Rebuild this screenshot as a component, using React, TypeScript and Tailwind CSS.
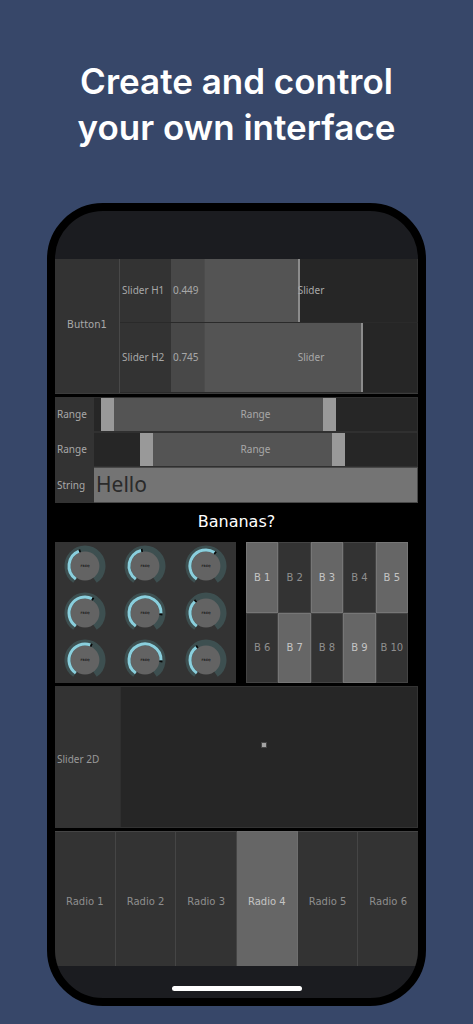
import { useState } from "react";
import type { PointerEvent } from "react";

type SliderProps = {
  label: string;
  initial: number;
};

type RangeProps = {
  low: number;
  high: number;
};

const KNOB_SWEEP = 145;

// Angles in degrees, 0 is straight up
const knobAngles = [-22, -14, 32, 26, 92, -44, 20, 92, -37];

function polar(angle: number, radius: number) {
  const rad = ((angle - 90) * Math.PI) / 180;
  return `${(21 + radius * Math.cos(rad)).toFixed(2)} ${(21 + radius * Math.sin(rad)).toFixed(2)}`;
}

function arc(from: number, to: number, radius: number) {
  const large = to - from > 180 ? 1 : 0;
  return `M ${polar(from, radius)} A ${radius} ${radius} 0 ${large} 1 ${polar(to, radius)}`;
}

function SliderRow({ label, initial }: SliderProps) {
  const [value, setValue] = useState(initial);

  return (
    <div className="flex border-b border-[#2a2a2a] font-['Noto_Sans',sans-serif]">
      <div className="flex w-[51px] items-center bg-[#333] pl-[2px]">{label}</div>
      <div className="flex w-[34px] items-center border-r border-[#4c4c4c] bg-[#484848] pl-[2px]">
        {value.toFixed(3)}
      </div>
      <div className="relative flex flex-1 items-center justify-center border-r border-[#303030] bg-[#262626]">
        <div
          className="absolute inset-y-0 left-0 border-r-2 border-[#8c8c8c] bg-[#545454]"
          style={{ width: `${value * 100}%` }}
        />
        <span className="relative">Slider</span>
        <input
          type="range"
          aria-label={label}
          min={0}
          max={1}
          step={0.001}
          value={value}
          onChange={(e) => setValue(Number(e.target.value))}
          className="absolute inset-0 h-full w-full cursor-pointer opacity-0"
        />
      </div>
    </div>
  );
}

function RangeRow({ low, high }: RangeProps) {
  const [start, setStart] = useState(low);
  const [end, setEnd] = useState(high);

  return (
    <div className="flex h-[35px]">
      <div className="flex w-[39px] items-center pl-[2px]">Range</div>
      <div className="relative flex flex-1 items-center justify-center border-y border-r border-[#303030] bg-[#262626]">
        <div
          className="absolute inset-y-0 border-x-[13px] border-[#999] bg-[#545454]"
          style={{ left: `${start}%`, right: `${100 - end}%` }}
        />
        <span className="relative">Range</span>
        <input
          type="range"
          aria-label="Range start"
          step={0.1}
          value={start}
          onChange={(e) => setStart(Math.min(Number(e.target.value), end - 10))}
          className="absolute inset-y-0 left-0 h-full w-1/2 cursor-pointer opacity-0"
        />
        <input
          type="range"
          aria-label="Range end"
          step={0.1}
          value={end}
          onChange={(e) => setEnd(Math.max(Number(e.target.value), start + 10))}
          className="absolute inset-y-0 right-0 h-full w-1/2 cursor-pointer opacity-0"
        />
      </div>
    </div>
  );
}

function Knob({ initial, name }: { initial: number; name: string }) {
  const [angle, setAngle] = useState(initial);

  return (
    <div className="relative flex items-center justify-center">
      <svg viewBox="0 0 42 42" className="size-[42px]" aria-hidden="true">
        <path d={arc(-KNOB_SWEEP, KNOB_SWEEP, 17)} fill="none" stroke="#3d4f50" strokeWidth="7" />
        <circle cx="21" cy="21" r="14.4" fill="#636363" />
        <path d={arc(-KNOB_SWEEP, angle, 16)} fill="none" stroke="#8acfdd" strokeWidth="3" />
        <path d={arc(angle, angle + 6, 16)} fill="none" stroke="#080808" strokeWidth="3" />
        <text
          x="21"
          y="22.3"
          textAnchor="middle"
          className="fill-[#1c1c1c] font-['DejaVu_Sans',sans-serif] text-[3px] font-bold"
        >
          FREQ
        </text>
      </svg>
      <input
        type="range"
        aria-label={name}
        min={-KNOB_SWEEP}
        max={KNOB_SWEEP - 6}
        value={angle}
        onChange={(e) => setAngle(Number(e.target.value))}
        className="absolute inset-0 h-full w-full cursor-pointer opacity-0"
      />
    </div>
  );
}

function ButtonGrid() {
  const [active, setActive] = useState([1, 3, 5, 7, 9]);

  const toggle = (n: number) => {
    setActive(active.includes(n) ? active.filter((a) => a !== n) : [...active, n]);
  };

  return (
    <div className="grid flex-1 grid-cols-5 grid-rows-2">
      {Array.from({ length: 10 }, (_, i) => i + 1).map((n) => {
        const isOn = active.includes(n);
        return (
          <button
            key={n}
            aria-pressed={isOn}
            onClick={() => toggle(n)}
            className={`border ${
              isOn ? "border-[#767676] bg-[#666] text-[#c4c4c4]" : "border-[#444] bg-[#333] text-[#8e8e8e]"
            }`}
          >
            B {n}
          </button>
        );
      })}
    </div>
  );
}

function Slider2D() {
  const [pos, setPos] = useState({ x: 48.4, y: 41.3 });

  const move = (e: PointerEvent<HTMLDivElement>) => {
    if (e.buttons === 0) return;
    const box = e.currentTarget.getBoundingClientRect();
    setPos({
      x: ((e.clientX - box.left) / box.width) * 100,
      y: ((e.clientY - box.top) / box.height) * 100,
    });
  };

  return (
    <div className="flex h-[142px] border border-l-0 border-[#333]">
      <div className="flex w-[66px] items-center border-r border-[#2f2f2f] bg-[#333] pt-1 pl-[2px] font-['Noto_Sans',sans-serif] text-[#999]">
        Slider 2D
      </div>
      <div
        className="relative flex-1 touch-none bg-[#262626]"
        onPointerDown={move}
        onPointerMove={move}
      >
        <span
          className="absolute size-1 -translate-1/2 bg-[#a3a3a3] outline outline-[#444]"
          style={{ left: `${pos.x}%`, top: `${pos.y}%` }}
        />
      </div>
    </div>
  );
}

function RadioRow() {
  const [selected, setSelected] = useState(4);

  return (
    <div className="flex h-[135px]">
      {[1, 2, 3, 4, 5, 6].map((n) => (
        <label
          key={n}
          className={`flex flex-1 cursor-pointer items-center justify-center border-t border-r pt-1 last:border-r-0 ${
            selected === n
              ? "border-[#6e6e6e] bg-[#666] text-[#c4c4c4]"
              : "border-[#454545] bg-[#333] text-[#8e8e8e]"
          }`}
        >
          <input
            type="radio"
            name="radio"
            checked={selected === n}
            onChange={() => setSelected(n)}
            className="sr-only"
          />
          Radio {n}
        </label>
      ))}
    </div>
  );
}

export default function App() {
  const [text, setText] = useState("Hello");

  return (
    <main className="min-h-screen bg-[#374769] px-[47px] pt-[58px] pb-[18px]">
      <h1 className="mb-[53px] text-center font-['Inter',sans-serif] text-[35px] leading-[46px] font-semibold whitespace-nowrap text-white">
        Create and control
        <br />
        your own interface
      </h1>

      <div className="relative overflow-hidden rounded-[56px] border-8 border-black bg-[#1b1c20] pt-12 font-['DejaVu_Sans',sans-serif] text-[10px] text-[#a8a8a8]">
        <div className="flex flex-col gap-[3px] bg-black">
          <div className="flex h-[135px] border-b border-[#3c3c3c]">
            <button className="w-[65px] border-r border-[#484848] bg-[#333] pb-1">Button1</button>
            <div className="grid flex-1 grid-rows-[64px_1fr]">
              <SliderRow label="Slider H1" initial={0.449} />
              <SliderRow label="Slider H2" initial={0.745} />
            </div>
          </div>

          <div className="bg-[#333] font-['Noto_Sans',sans-serif]">
            <RangeRow low={2.3} high={75} />
            <RangeRow low={14.3} high={77.8} />
            <div className="flex h-[36px]">
              <label htmlFor="string" className="flex w-[39px] items-center pl-[2px]">
                String
              </label>
              <input
                id="string"
                type="text"
                value={text}
                onChange={(e) => setText(e.target.value)}
                className="min-w-0 flex-1 border border-l-0 border-[#484848] bg-[#747474] px-[2px] text-[21px] text-[#2a2a2a] outline-none"
              />
            </div>
          </div>

          <p className="h-[33px] text-center text-[16px] leading-[32px] text-white">Bananas?</p>

          <div className="flex h-[141px] gap-[10px] pr-[10px]">
            <div className="grid w-[181px] shrink-0 grid-cols-3 grid-rows-3 bg-[#333]">
              {knobAngles.map((angle, i) => (
                <Knob key={i} initial={angle} name={`Freq ${i + 1}`} />
              ))}
            </div>
            <ButtonGrid />
          </div>

          <Slider2D />
          <RadioRow />
        </div>

        <div className="flex h-[32px] items-start justify-center pt-5">
          <div className="h-[5px] w-[130px] rounded-full bg-white" />
        </div>
      </div>
    </main>
  );
}
